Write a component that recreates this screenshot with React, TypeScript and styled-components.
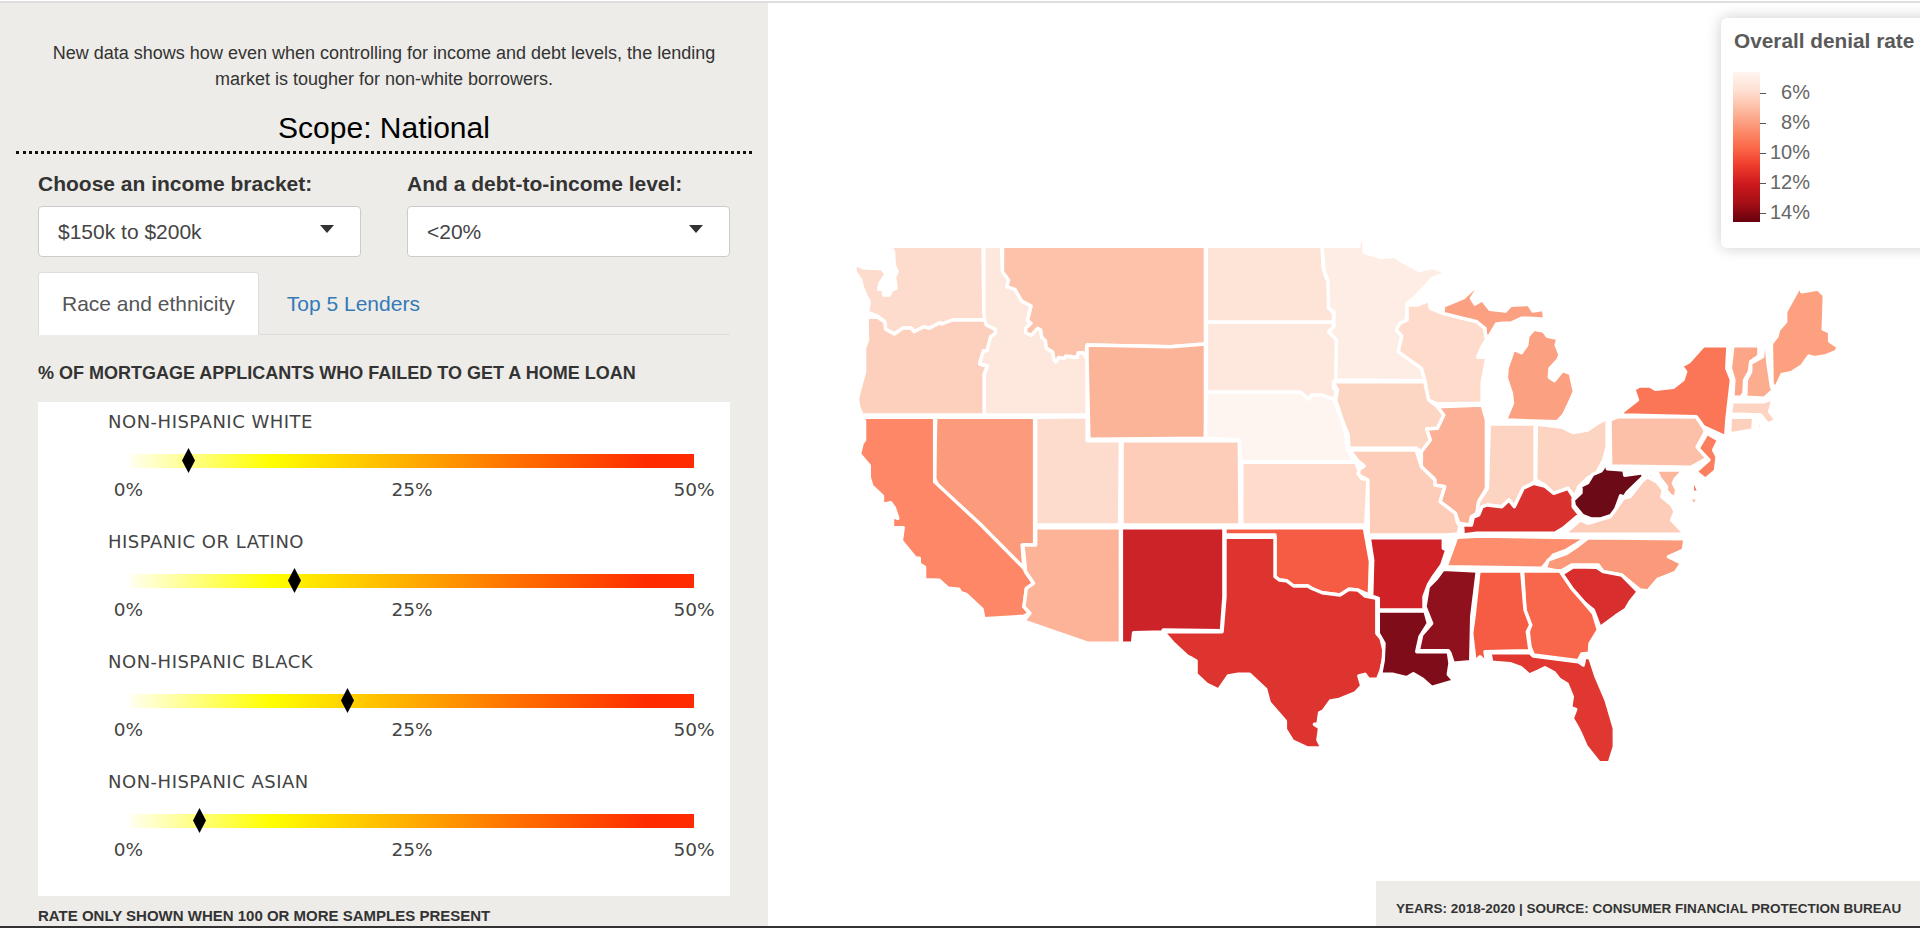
import React from "react";
import styled, { createGlobalStyle } from "styled-components";

const GlobalStyle = createGlobalStyle`
  html, body { margin: 0; padding: 0; background: #fff; overflow: hidden; }
  * { box-sizing: border-box; }
`;

const Page = styled.div`
  width: 1920px;
  height: 928px;
  display: flex;
  flex-direction: column;
  font-family: "Liberation Sans", Arial, sans-serif;
  color: #333;
`;
const TopRule = styled.div`
  flex: none;
  height: 2px;
  margin-top: 1px;
  background: #dedede;
`;
const BottomRule = styled.div`
  flex: none;
  height: 2px;
  background: #333;
`;
const Main = styled.div`
  flex: 1;
  min-height: 0;
  display: flex;
`;
const Sidebar = styled.aside`
  flex: none;
  width: 768px;
  background: #edece8;
  padding: 37px 38px 0;
  overflow: hidden;
`;
const Intro = styled.p`
  margin: 0;
  font-size: 18px;
  line-height: 26px;
  text-align: center;
  color: #333;
`;
const Scope = styled.h2`
  margin: 18px 0 0;
  font-size: 30px;
  font-weight: 400;
  line-height: 36px;
  text-align: center;
  color: #000;
`;
const DottedRule = styled.div`
  margin: 5px -22px 0;
  border-bottom: 3px dotted #111;
`;
const Filters = styled.div`
  display: grid;
  grid-template-columns: 323px 323px;
  column-gap: 46px;
  margin-top: 19px;
`;
const Filter = styled.label`
  display: flex;
  flex-direction: column;
  font-size: 21px;
  font-weight: 700;
  line-height: 22px;
`;
const Select = styled.div`
  display: flex;
  align-items: center;
  justify-content: space-between;
  height: 51px;
  margin-top: 11px;
  padding: 0 26px 0 19px;
  background: #fff;
  border: 1px solid #ccc;
  border-radius: 4px;
  font-size: 21px;
  font-weight: 400;
  color: #444;
`;
const Caret = styled.span`
  width: 0;
  height: 0;
  margin-top: -5px;
  border-left: 7.5px solid transparent;
  border-right: 7.5px solid transparent;
  border-top: 8px solid #333;
`;
const Tabs = styled.div`
  display: flex;
  margin-top: 15px;
  height: 63px;
  border-bottom: 1px solid #ddd;
`;
const Tab = styled.div<{ $active?: boolean }>`
  display: flex;
  align-items: center;
  height: 63px;
  padding: 0 ${(p) => (p.$active ? "23px" : "27px")};
  font-size: 21px;
  color: ${(p) => (p.$active ? "#555" : "#337ab7")};
  background: ${(p) => (p.$active ? "#fff" : "transparent")};
  border: 1px solid ${(p) => (p.$active ? "#ddd" : "transparent")};
  border-bottom: 0;
  border-radius: 4px 4px 0 0;
`;
const ChartTitle = styled.h3`
  margin: 28px 0 0;
  font-size: 18px;
  font-weight: 700;
  line-height: 20px;
  color: #333;
  white-space: nowrap;
`;
const ChartCard = styled.div`
  height: 494px;
  margin-top: 19px;
  padding-top: 9px;
  background: #fff;
`;
const Row = styled.div`
  height: 120px;
  padding-left: 70px;
`;
const RowLabel = styled.div`
  font-family: "DejaVu Sans", sans-serif;
  font-size: 18px;
  letter-spacing: 0.5px;
  line-height: 22px;
  color: #444;
`;
const Track = styled.div`
  position: relative;
  width: 564px;
  height: 14px;
  margin: 21px 0 0 22px;
  background: linear-gradient(
    90deg,
    #fffff0 0%,
    #ffff00 25%,
    #ff7a00 65%,
    #ff2a00 92%,
    #ff2a00 100%
  );
`;
const Marker = styled.svg`
  position: absolute;
  top: -6px;
  width: 13px;
  height: 25px;
  margin-left: -6.5px;
`;
const Ticks = styled.div`
  position: relative;
  width: 564px;
  height: 20px;
  margin: 12px 0 0 22px;
`;
const Tick = styled.span<{ $at: number }>`
  position: absolute;
  top: 0;
  left: ${(p) => p.$at}%;
  transform: translateX(-50%);
  font-family: "DejaVu Sans", sans-serif;
  font-size: 18.5px;
  line-height: 20px;
  color: #444;
`;
const Note = styled.div`
  margin-top: 12px;
  font-size: 15px;
  font-weight: 700;
  line-height: 16px;
  color: #333;
  white-space: nowrap;
`;
const MapArea = styled.main`
  position: relative;
  flex: 1;
  min-width: 0;
  overflow: hidden;
  background: #fff;
`;
const MapSvg = styled.svg`
  display: block;
  width: 1152px;
  height: 923px;
`;
const State = styled.polygon`
  stroke: #fff;
  stroke-width: 3.4;
  stroke-linejoin: round;
`;
const Legend = styled.div`
  position: absolute;
  top: 15px;
  left: 953px;
  width: 260px;
  height: 230px;
  padding: 11px 12px;
  background: #fff;
  border-radius: 6px;
  box-shadow: 0 0 15px rgba(0, 0, 0, 0.2);
  color: #666;
`;
const LegendTitle = styled.div`
  padding-left: 1px;
  font-size: 20.8px;
  font-weight: 700;
  line-height: 24px;
  color: #5a5a5a;
  white-space: nowrap;
`;
const LegendBody = styled.div`
  display: flex;
  margin-top: 19px;
`;
const Ramp = styled.div`
  width: 27px;
  height: 150px;
  background: linear-gradient(
    180deg,
    #fff5f0 0%,
    #fee0d2 12.5%,
    #fcbba1 25%,
    #fc9272 37.5%,
    #fb6a4a 50%,
    #ef3b2c 62.5%,
    #cb181d 75%,
    #a50f15 87.5%,
    #67000d 100%
  );
`;
const LegendScale = styled.div`
  position: relative;
  width: 50px;
  height: 150px;
`;
const LegendStop = styled.div<{ $y: number }>`
  position: absolute;
  left: 0;
  top: ${(p) => p.$y - 13}px;
  width: 50px;
  height: 24px;
  display: flex;
  align-items: center;
  justify-content: flex-end;
  font-size: 20px;
  color: #666;
  &::before {
    content: "";
    position: absolute;
    left: 0;
    top: 12.5px;
    width: 6px;
    height: 1px;
    background: #555;
  }
`;
const Footer = styled.div`
  position: absolute;
  right: 0;
  bottom: 0;
  width: 544px;
  height: 45px;
  padding: 20px 0 0 20px;
  background: #edece8;
  font-size: 13.5px;
  font-weight: 700;
  line-height: 16px;
  color: #333;
  white-space: nowrap;
`;

// State outlines were traced from crops of different regions, each with its own origin and scale.
const pts = (ox: number, oy: number, sx: number, sy: number) => (s: TemplateStringsArray) =>
  s[0]
    .trim()
    .split(/\s+/)
    .map((p) => {
      const [x, y] = p.split(",").map(Number);
      return `${(ox + x / sx).toFixed(1)},${(oy + y / sy).toFixed(1)}`;
    })
    .join(" ");
const W = pts(840, 230, 2.8, 3);
const E = pts(1300, 230, 2.8, 3);
const S = pts(1300, 500, 3, 3);
const V = pts(1560, 440, 3, 3);

const states: { id: string; fill: string; points: string }[] = [
  { id: "WA", fill: "#fedccd", points: W`140,49 400,49 403,250 410,270 315,270 285,282 280,278 250,295 235,290 207,305 200,295 178,293 152,312 128,298 125,275 105,258 85,250 78,262 78,240 82,215 72,195 62,170 58,150 42,125 42,102 65,113 118,116 125,128 132,128 112,160 108,178 120,178 122,195 138,195 145,180 157,175 153,140 160,125 152,105 150,65` },
  { id: "OR", fill: "#fdd0bd", points: W`76,262 105,262 125,275 128,298 152,312 178,293 200,295 207,305 235,290 250,295 280,278 285,282 315,270 405,270 410,285 435,298 435,310 422,320 412,362 402,362 392,395 392,402 413,408 404,432 404,555 62,555 52,530 49,505 69,425 69,355 77,330` },
  { id: "ID", fill: "#fee8dd", points: W`403,49 452,49 455,125 472,150 467,170 490,178 508,212 535,228 525,272 535,280 520,295 520,308 535,316 553,295 562,300 565,322 575,332 578,355 595,365 600,390 605,395 612,382 628,385 632,378 664,382 667,368 680,368 692,388 692,555 404,555 404,432 413,408 392,402 392,395 402,362 412,362 422,320 435,310 435,298 410,285 405,270 403,250` },
  { id: "MT", fill: "#fcc2aa", points: W`455,49 1023,49 1023,342 925,350 692,345 688,375 680,368 667,368 664,382 632,378 628,385 612,382 605,395 600,390 595,365 578,355 575,332 565,322 562,300 553,295 535,316 520,308 520,295 535,280 525,272 535,228 508,212 490,178 467,170 472,150 455,125` },
  { id: "WY", fill: "#fcb499", points: W`692,345 925,350 1023,342 1023,625 697,628 692,388` },
  { id: "ND", fill: "#fee3d7", points: W`1026,49 1350,49 1352,110 1362,145 1370,150 1370,235 1382,250 1382,277 1026,277` },
  { id: "SD", fill: "#fee8de", points: W`1026,277 1382,277 1382,290 1370,305 1392,330 1390,450 1382,455 1382,475 1390,485 1383,508 1350,495 1320,495 1312,508 1290,487 1026,487` },
  { id: "NE", fill: "#fff5f0", points: W`1026,487 1290,487 1312,508 1320,495 1350,495 1383,508 1405,570 1415,610 1420,655 1440,695 1122,695 1118,630 1023,625` },
  { id: "MN", fill: "#feede5", points: E`62,49 165,49 165,27 178,32 180,67 225,82 265,79 290,97 335,122 370,112 410,127 370,146 325,198 300,220 300,270 280,280 270,300 285,318 275,365 340,415 350,452 100,450 102,330 80,305 95,290 95,245 80,235 78,150 68,125` },
  { id: "WI", fill: "#fedbcb", points: E`300,225 330,225 360,212 365,235 400,250 495,275 518,295 520,320 528,318 510,350 497,382 512,382 525,365 520,400 510,460 510,520 385,522 360,510 352,470 350,452 340,415 275,365 285,318 270,300 280,280 300,270` },
  { id: "MIU", fill: "#fca082", points: E`402,228 430,216 458,203 490,172 499,172 480,205 490,222 510,209 532,238 575,243 590,226 640,223 652,243 682,238 685,268 640,265 620,265 590,280 570,280 550,282 530,318 520,320 518,295 495,275 400,250` },
  { id: "MIL", fill: "#fca082", points: E`598,358 620,368 635,345 638,318 655,298 682,303 692,318 722,326 717,345 728,375 722,390 700,415 698,442 712,452 735,422 757,430 768,485 758,510 738,555 720,575 575,570 595,520 592,490 578,445 580,415` },
  { id: "IA", fill: "#fdd5c3", points: E`100,455 350,455 352,470 360,510 385,530 403,555 385,595 355,597 365,630 340,665 325,655 137,655 135,615 120,575 100,510 105,480 95,460` },
  { id: "IL", fill: "#fcb095", points: E`385,530 510,525 522,570 522,775 500,815 495,850 480,860 475,885 445,880 435,850 392,815 405,770 378,765 375,745 340,710 340,665 365,630 355,597 385,595 403,555` },
  { id: "IN", fill: "#fdd3c1", points: E`530,582 658,582 658,755 625,775 600,830 585,810 565,830 525,825 497,845 500,815 525,775` },
  { id: "OH", fill: "#fdd3c1", points: E`662,582 735,592 765,608 805,600 830,582 860,565 860,650 850,690 830,730 805,745 780,770 770,800 750,775 710,790 685,765 660,750` },
  { id: "KY", fill: "#d9322e", points: E`455,885 480,885 485,862 500,855 510,830 525,825 565,830 585,810 600,830 625,775 655,760 685,768 710,790 750,775 765,800 765,830 785,858 775,860 737,895 714,910 495,910 457,915` },
  { id: "VA", fill: "#fdcdba", points: V`15,280 60,240 85,250 150,230 165,210 190,175 210,170 245,125 262,110 290,125 310,150 305,170 335,195 345,215 335,240 375,283 15,283` },
  { id: "WV", fill: "#6c0a17", points: V`40,180 63,158 63,138 83,128 98,103 123,93 130,83 135,58 142,86 192,90 194,106 247,98 250,110 202,157 192,172 182,167 167,207 152,227 120,237 95,237 68,227 43,197` },
  { id: "WV2", fill: "#6c0a17", points: V`258,94 282,103 275,115` },
  { id: "PA", fill: "#fcc0a8", points: E`868,570 890,560 1110,560 1128,590 1135,605 1112,650 1140,685 1095,712 870,708` },
  { id: "NY", fill: "#fb7657", points: E`903,555 903,545 945,510 935,478 950,468 980,468 995,478 1045,472 1072,450 1080,425 1068,408 1090,395 1130,347 1198,347 1195,415 1208,450 1195,570 1192,620 1130,590 1110,560` },
  { id: "NYLI", fill: "#fb7657", points: E`1185,648 1255,628 1250,635 1190,648` },
  { id: "VT", fill: "#fca587", points: E`1212,347 1285,347 1285,378 1262,395 1258,425 1245,450 1243,490 1235,502 1212,502 1215,450 1205,415` },
  { id: "NH", fill: "#fcad90", points: E`1262,400 1295,380 1300,335 1305,335 1310,400 1320,470 1325,480 1300,505 1248,502 1250,450 1262,425` },
  { id: "ME", fill: "#fca080", points: E`1320,340 1335,320 1340,300 1360,275 1360,245 1400,168 1405,185 1450,177 1468,196 1465,298 1483,306 1483,333 1508,352 1500,365 1470,378 1440,383 1425,378 1405,408 1375,428 1350,433 1330,478 1322,460` },
  { id: "MA", fill: "#fdd3c1", points: E`1210,515 1300,515 1325,505 1320,525 1315,545 1333,570 1310,582 1290,555 1205,552` },
  { id: "CT", fill: "#fdd0bd", points: E`1205,562 1270,562 1268,600 1203,612` },
  { id: "RI", fill: "#fdd0bd", points: E`1282,562 1290,570 1292,598 1280,598` },
  { id: "NJ", fill: "#fb7f5e", points: E`1140,610 1172,630 1158,660 1168,680 1163,722 1135,748 1108,725 1145,690 1115,655` },
  { id: "MD", fill: "#fcb69b", points: V`288,90 370,90 345,118 340,130 350,150 345,175 330,165 318,150 320,140 300,115` },
  { id: "DE", fill: "#f66a4e", points: V`395,105 417,155 398,158` },
  { id: "MD2", fill: "#fcb69b", points: V`386,175 417,172 403,197` },
  { id: "KS", fill: "#fedbcb", points: W`1125,697 1445,697 1450,715 1465,710 1450,730 1460,745 1478,750 1472,885 1125,885` },
  { id: "CO", fill: "#fdcdba", points: W`790,632 1118,632 1120,885 790,885` },
  { id: "UT", fill: "#fedccd", points: W`548,562 692,560 692,632 785,632 783,885 548,885` },
  { id: "NV", fill: "#fc9b7c", points: W`268,562 545,562 545,945 510,945 515,1015 390,880 275,770 265,745` },
  { id: "CA", fill: "#fd8766", points: W`66,562 265,562 265,755 390,880 515,1015 522,1030 542,1060 522,1075 515,1130 530,1150 515,1159 403,1166 398,1138 353,1093 338,1088 333,1078 303,1075 278,1051 237,1049 237,1012 222,1002 222,985 212,985 172,932 177,893 147,893 147,860 162,865 152,833 142,818 119,823 119,798 89,768 82,742 82,707 55,672 62,640 69,630 69,575` },
  { id: "AZ", fill: "#fcb398", points: W`548,893 785,893 785,1240 695,1240 515,1173 532,1150 515,1130 522,1075 542,1060 520,1025 512,945 548,945` },
  { id: "NM", fill: "#cb2327", points: W`788,893 1075,893 1075,1100 1068,1202 905,1200 905,1206 822,1208 819,1240 788,1240` },
  { id: "OK", fill: "#f65c44", points: W`1078,893 1468,893 1485,995 1482,1095 1450,1080 1425,1078 1400,1095 1350,1088 1320,1075 1310,1068 1270,1068 1250,1052 1230,1050 1218,1040 1218,915 1078,915` },
  { id: "TX", fill: "#de342f", points: W`1078,922 1218,922 1218,1040 1230,1050 1250,1052 1270,1068 1310,1068 1320,1075 1350,1088 1400,1095 1425,1078 1450,1080 1470,1098 1503,1105 1503,1210 1515,1225 1525,1270 1515,1320 1505,1348 1480,1348 1470,1333 1453,1338 1461,1368 1443,1388 1398,1408 1373,1413 1353,1443 1343,1448 1338,1483 1328,1483 1343,1493 1338,1530 1350,1555 1308,1553 1267,1533 1247,1498 1247,1473 1202,1418 1192,1378 1147,1333 1115,1333 1087,1338 1060,1380 1027,1363 997,1333 997,1293 982,1283 972,1278 932,1238 905,1205 1070,1205 1078,1100` },
  { id: "MO", fill: "#fdcdba", points: `${E`140,660 325,660 340,710 378,750 378,765 405,770 392,815 435,850 440,875 445,885 455,900`} ${S`480,75 475,102 440,105 205,105`} ${E`190,750 165,735 165,720 180,708 160,690`}` },
  { id: "TN", fill: "#fc8d6d", points: S`438,200 470,112 540,108 860,113 800,150 760,165 725,205` },
  { id: "NC", fill: "#fb9a7a", points: S`865,113 1155,116 1150,150 1105,170 1145,190 1125,218 1073,238 1043,273 1020,270 965,225 910,215 895,195 815,195 780,215 735,205 745,180 800,160 830,140` },
  { id: "SC", fill: "#d82f2e", points: S`785,222 820,200 890,202 910,215 965,225 1015,275 992,303 977,328 947,348 900,383 880,330 850,305 815,265` },
  { id: "GA", fill: "#f8664b", points: S`668,213 780,213 815,265 850,305 880,340 895,390 870,430 868,460 845,462 835,482 700,465 690,440 685,395 692,375 675,330` },
  { id: "AL", fill: "#f65c44", points: S`537,213 665,213 675,330 692,375 682,395 690,452 555,455 560,490 540,470 525,485 515,400 522,350` },
  { id: "MS", fill: "#8f111d", points: S`430,208 532,213 515,350 512,485 460,490 450,460 445,452 355,452 365,405 395,370 375,320 385,260 410,235` },
  { id: "LA", fill: "#7f0d19", points: S`235,333 375,333 385,370 360,410 350,455 445,455 450,490 445,523 462,543 395,562 368,538 340,521 320,533 280,523 242,523 250,480 252,430 235,400` },
  { id: "AR", fill: "#cf2126", points: S`208,113 430,113 430,145 440,150 425,195 400,230 385,255 372,290 372,330 235,330 235,295 215,288 218,180` },
  { id: "FL", fill: "#e03730", points: S`575,487 570,458 690,458 700,468 835,485 850,495 855,470 870,475 888,530 918,600 943,685 943,740 928,788 898,788 858,738 843,703 833,683 817,655 827,628 812,623 817,590 802,553 778,538 763,518 735,503 715,513 688,525 663,503 630,491` },
];

const rows = [
  { label: "NON-HISPANIC WHITE", value: 10.4 },
  { label: "HISPANIC OR LATINO", value: 29.1 },
  { label: "NON-HISPANIC BLACK", value: 38.6 },
  { label: "NON-HISPANIC ASIAN", value: 12.4 },
];
const legendStops = [
  { y: 21, label: "6%" },
  { y: 51, label: "8%" },
  { y: 81, label: "10%" },
  { y: 111, label: "12%" },
  { y: 141, label: "14%" },
];

export default function App() {
  return (
    <>
      <GlobalStyle />
      <Page>
        <TopRule />
        <Main>
          <Sidebar>
            <Intro>
              New data shows how even when controlling for income and debt levels, the lending
              <br />
              market is tougher for non-white borrowers.
            </Intro>
            <Scope>Scope: National</Scope>
            <DottedRule />
            <Filters>
              <Filter>
                Choose an income bracket:
                <Select>
                  $150k to $200k
                  <Caret />
                </Select>
              </Filter>
              <Filter>
                And a debt-to-income level:
                <Select>
                  &lt;20%
                  <Caret />
                </Select>
              </Filter>
            </Filters>
            <Tabs>
              <Tab $active>Race and ethnicity</Tab>
              <Tab>Top 5 Lenders</Tab>
            </Tabs>
            <ChartTitle>% OF MORTGAGE APPLICANTS WHO FAILED TO GET A HOME LOAN</ChartTitle>
            <ChartCard>
              {rows.map((r) => (
                <Row key={r.label}>
                  <RowLabel>{r.label}</RowLabel>
                  <Track>
                    <Marker viewBox="0 0 13 25" style={{ left: `${r.value}%` }}>
                      <polygon points="6.5,0 13,12.5 6.5,25 0,12.5" fill="#000" />
                    </Marker>
                  </Track>
                  <Ticks>
                    <Tick $at={-0.3}>0%</Tick>
                    <Tick $at={50}>25%</Tick>
                    <Tick $at={100}>50%</Tick>
                  </Ticks>
                </Row>
              ))}
            </ChartCard>
            <Note>RATE ONLY SHOWN WHEN 100 OR MORE SAMPLES PRESENT</Note>
          </Sidebar>
          <MapArea>
            <MapSvg viewBox="768 3 1152 923">
              {states.map((s) => (
                <State key={s.id} points={s.points} fill={s.fill} />
              ))}
            </MapSvg>
            <Legend>
              <LegendTitle>Overall denial rate</LegendTitle>
              <LegendBody>
                <Ramp />
                <LegendScale>
                  {legendStops.map((s) => (
                    <LegendStop key={s.label} $y={s.y}>
                      {s.label}
                    </LegendStop>
                  ))}
                </LegendScale>
              </LegendBody>
            </Legend>
            <Footer>YEARS: 2018-2020 | SOURCE: CONSUMER FINANCIAL PROTECTION BUREAU</Footer>
          </MapArea>
        </Main>
        <BottomRule />
      </Page>
    </>
  );
}
